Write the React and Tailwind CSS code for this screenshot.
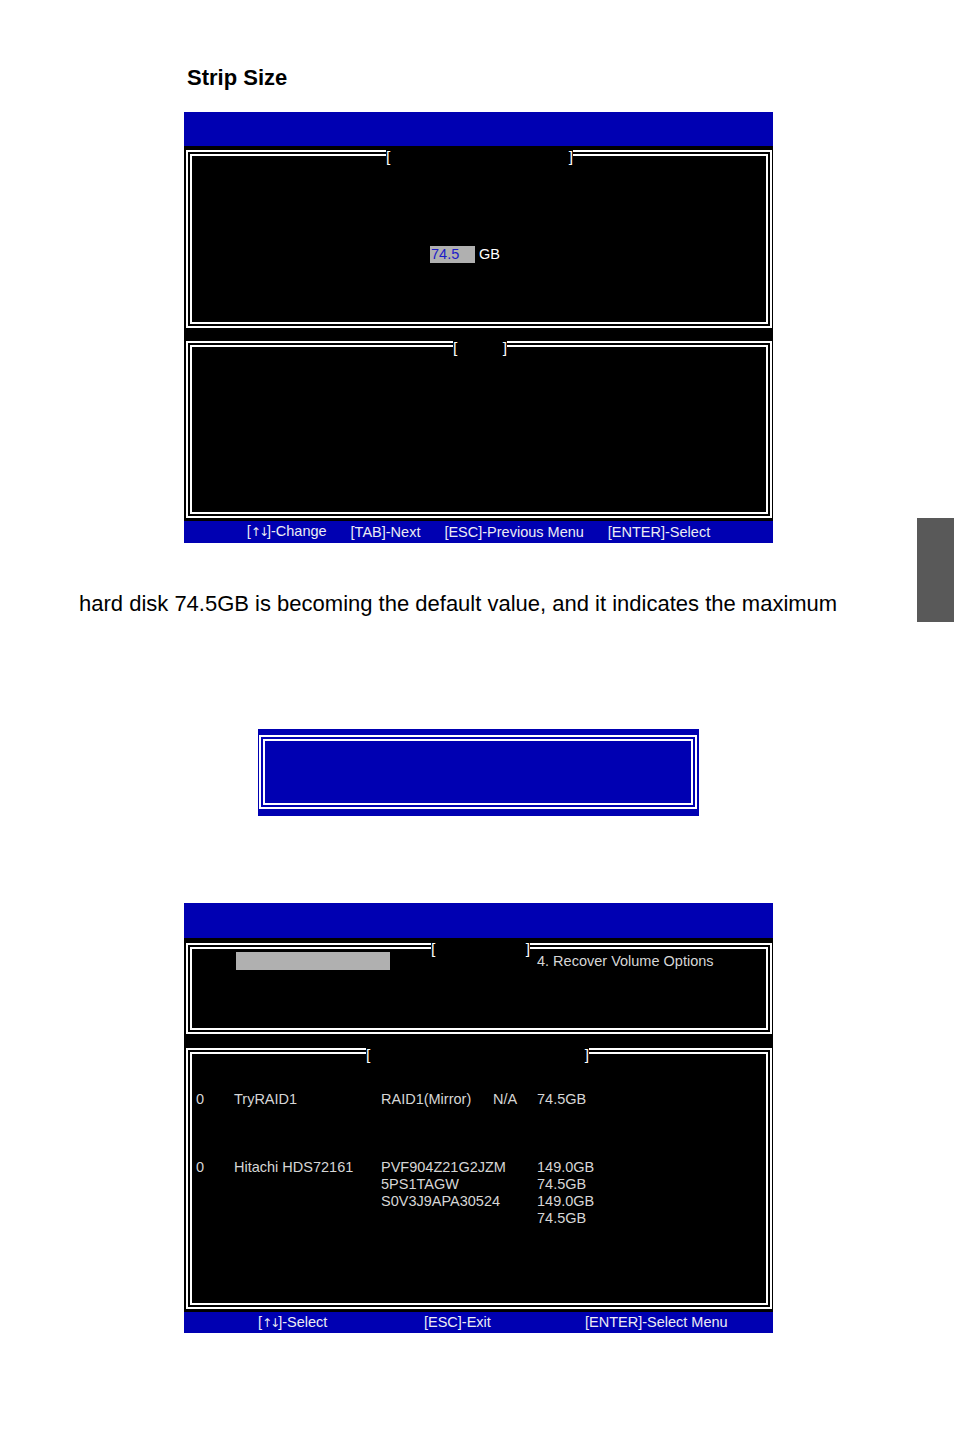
import React from "react";

const BLUE = "bg-[#0000b2]";

function Frame({ className = "", titleClass = "", children }) {
  return (
    <div className={`relative border-[6px] border-double border-white ${className}`}>
      {titleClass && (
        <div className={`absolute flex justify-between bg-black text-white text-[15.5px] leading-[17px] ${titleClass}`}>
          <span>[</span>
          <span>]</span>
        </div>
      )}
      {children}
    </div>
  );
}

function Arrows() {
  return <span className="font-['DejaVu_Sans',sans-serif] text-[12px] tracking-[-2px]">↑↓</span>;
}

export default function App() {
  return (
    <div className="relative w-[954px] h-[1452px] bg-white text-black font-['Liberation_Sans',Arial,sans-serif]">
      <div className="pt-[66px] pl-[187px] text-[22px] leading-[24px] font-bold">Strip Size</div>

      {/* Screen 1 */}
      <div className="ml-[184px] mt-[22px] w-[589px]">
        <div className={`h-[34px] ${BLUE}`} />
        <div className="bg-black pt-[4px] pb-[3px] pl-[2px] pr-[1px] flex flex-col gap-[13px]">
          <Frame className="h-[178px]" titleClass="-top-[8px] left-[194px] w-[187px]">
            <div className="pt-[90px] pl-[238px] flex items-center text-[14.5px] leading-[17px]">
              <span className="bg-[#b0b0b0] text-[#1c1cc8] w-[45px] h-[17px] pl-[1px]">74.5</span>
              <span className="ml-[4px] text-white">GB</span>
            </div>
          </Frame>
          <Frame className="h-[177px]" titleClass="-top-[8px] left-[261px] w-[54px]" />
        </div>
        <div className={`h-[22px] ${BLUE} flex justify-center items-center gap-[24px] text-[14.5px] leading-[17px] text-[#ececf4]`}>
          <span>[<Arrows />]-Change</span>
          <span>[TAB]-Next</span>
          <span>[ESC]-Previous Menu</span>
          <span>[ENTER]-Select</span>
        </div>
      </div>

      <p className="mt-[48px] pl-[79px] text-[22px] leading-[26px]">
        hard disk 74.5GB is becoming the default value, and it indicates the maximum
      </p>

      {/* Screen 2 */}
      <div className={`ml-[258px] mt-[112px] w-[441px] h-[87px] ${BLUE} pt-[6px] pl-[1px] pr-[2px]`}>
        <div className="h-[74px] border-[6px] border-double border-white" />
      </div>

      {/* Screen 3 */}
      <div className="ml-[184px] mt-[87px] w-[589px]">
        <div className={`h-[35px] ${BLUE}`} />
        <div className="bg-black pt-[5px] pb-[3px] pl-[2px] pr-[1px] flex flex-col gap-[14px] text-[14.5px] leading-[17px] text-[#d6d6d6]">
          <Frame className="h-[91px]" titleClass="-top-[9px] left-[239px] w-[99px]">
            <div className="pt-[3px] pl-[44px] flex items-center">
              <div className="w-[154px] h-[18px] bg-[#b0b0b0]" />
              <span className="ml-[147px]">4. Recover Volume Options</span>
            </div>
          </Frame>
          <Frame className="h-[261px]" titleClass="-top-[8px] left-[174px] w-[223px]">
            <div className="pt-[37px] pl-[4px]">
              <div className="flex">
                <span className="w-[38px]">0</span>
                <span className="w-[147px]">TryRAID1</span>
                <span className="w-[112px]">RAID1(Mirror)</span>
                <span className="w-[44px]">N/A</span>
                <span>74.5GB</span>
              </div>
              <div className="flex mt-[51px]">
                <span className="w-[38px]">0</span>
                <span className="w-[147px]">Hitachi HDS72161</span>
                <div className="w-[156px] flex flex-col">
                  <span>PVF904Z21G2JZM</span>
                  <span>5PS1TAGW</span>
                  <span>S0V3J9APA30524</span>
                </div>
                <div className="flex flex-col">
                  <span>149.0GB</span>
                  <span>74.5GB</span>
                  <span>149.0GB</span>
                  <span>74.5GB</span>
                </div>
              </div>
            </div>
          </Frame>
        </div>
        <div className={`h-[21px] ${BLUE} flex items-center pl-[74px] text-[14.5px] leading-[17px] text-[#ececf4]`}>
          <span className="w-[166px]">[<Arrows />]-Select</span>
          <span className="w-[161px]">[ESC]-Exit</span>
          <span>[ENTER]-Select Menu</span>
        </div>
      </div>

      <div className="absolute right-0 top-[518px] w-[37px] h-[104px] bg-[#595959]" />
    </div>
  );
}
